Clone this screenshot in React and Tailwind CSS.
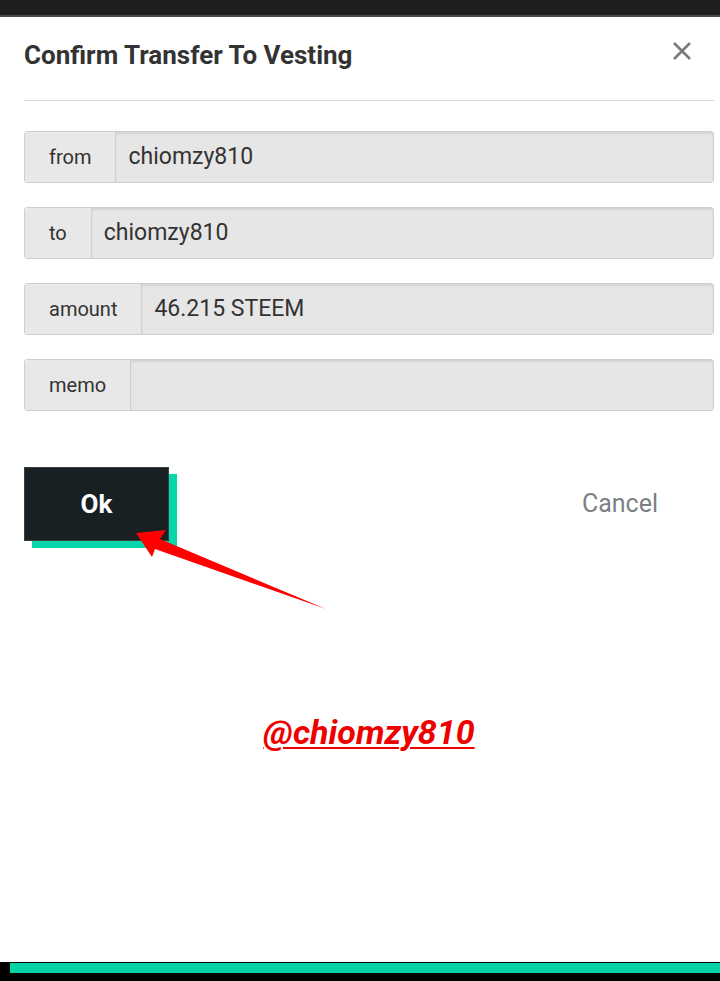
import React from "react";

const fields = [
  { label: "from", value: "chiomzy810" },
  { label: "to", value: "chiomzy810" },
  { label: "amount", value: "46.215 STEEM" },
  { label: "memo", value: "" },
];

const Field = ({ label, value }) => (
  <div className="flex h-[52px] rounded-[3px] border border-[#cfcfcf]">
    <span className="flex items-center rounded-l-[3px] bg-[#e8e8e8] px-6 text-[20px] text-[#333] border-r border-[#cfcfcf]">
      {label}
    </span>
    <div className="flex flex-1 items-center bg-[#e6e6e6] pl-[12px] text-[23px] text-[#333] shadow-[inset_0_2px_2px_rgba(0,0,0,0.08)]">
      {value}
    </div>
  </div>
);

export default function App() {
  return (
    <div className="relative flex h-[981px] w-[720px] flex-col overflow-hidden bg-white font-['Roboto',sans-serif]">
      {/* top browser strip */}
      <div className="h-[15px] bg-[#1e1e1e]" />
      <div className="h-[2px] bg-[#4a4a4a]" />

      <div className="flex flex-1 flex-col pl-6 pr-[6px]">
        {/* header */}
        <div className="mt-[22px] flex h-8 items-center justify-between">
          <h2 className="text-[26px] font-bold leading-8 text-[#333]">Confirm Transfer To Vesting</h2>
          <svg width="20" height="20" viewBox="0 0 20 20" className="mr-[22px] -mt-[9px]">
            <path d="M2 2L18 18M18 2L2 18" stroke="#7a7a7a" strokeWidth="2.6" />
          </svg>
        </div>
        <div className="mt-[29px] h-px bg-[#d4d4d4]" />

        {/* form */}
        <div className="mt-[30px] flex flex-col gap-6">
          {fields.map((f) => (
            <Field key={f.label} {...f} />
          ))}
        </div>

        {/* actions */}
        <div className="mt-[56px] flex items-center justify-between pr-[56px]">
          <button className="flex h-[74px] w-[145px] items-center justify-center border border-[#3a3f42] bg-[#182023] text-[26px] font-bold text-white shadow-[8px_7px_0_#06d6a9]">
            Ok
          </button>
          <span className="text-[25px] text-[#7b8084]">Cancel</span>
        </div>

        {/* signature */}
        <div className="mt-[166px] flex justify-center">
          <span className="text-[34px] font-bold italic text-[#ee0000] underline decoration-2 underline-offset-[3px]">
            @chiomzy810
          </span>
        </div>
        <div className="flex-1" />
      </div>

      {/* bottom strip */}
      <div className="h-[19px] bg-black pt-px">
        <div className="ml-[10px] h-[10px] bg-[#06d3a6]" />
      </div>

      {/* annotation arrow */}
      <svg className="pointer-events-none absolute left-0 top-0" width="720" height="981">
        <polygon
          points="136,533 166,530 160,539 326,609 155,549 152,557"
          fill="#ff0000"
        />
      </svg>
    </div>
  );
}
